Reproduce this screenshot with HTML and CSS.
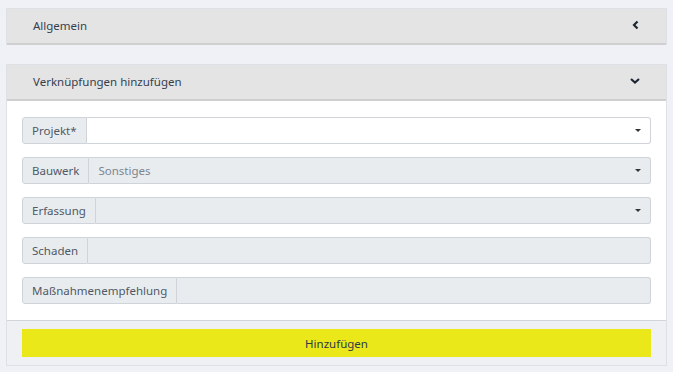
FILE: index.html
```html
<!DOCTYPE html>
<html lang="de">
<head>
    <meta charset="UTF-8">
    <meta name="viewport" content="width=device-width, initial-scale=1.0">
    <title>Verknüpfungen</title>
    <link rel="stylesheet" href="styles.css">
</head>
<body>
    <div class="card">
        <div class="card-header">
            <span>Allgemein</span>
            <svg class="chev" width="10" height="10" viewBox="0 0 10 10"><path d="M6.5 1.5 L3 5 L6.5 8.5" fill="none" stroke="#1d2733" stroke-width="2.2"/></svg>
        </div>
    </div>

    <div class="card">
        <div class="card-header">
            <span>Verknüpfungen hinzufügen</span>
            <svg class="chev" width="12" height="10" viewBox="0 0 12 10"><path d="M2 3 L6 6.5 L10 3" fill="none" stroke="#1d2733" stroke-width="2.2"/></svg>
        </div>
        <div class="card-body">
            <div class="input-group">
                <label class="addon">Projekt*</label>
                <div class="field select white"><span></span><i class="caret"></i></div>
            </div>
            <div class="input-group">
                <label class="addon">Bauwerk</label>
                <div class="field select"><span>Sonstiges</span><i class="caret"></i></div>
            </div>
            <div class="input-group">
                <label class="addon">Erfassung</label>
                <div class="field select"><span></span><i class="caret"></i></div>
            </div>
            <div class="input-group">
                <label class="addon">Schaden</label>
                <div class="field"></div>
            </div>
            <div class="input-group">
                <label class="addon">Maßnahmenempfehlung</label>
                <div class="field"></div>
            </div>
        </div>
        <div class="card-footer">
            <button class="add-btn">Hinzufügen</button>
        </div>
    </div>
</body>
</html>
```

FILE: styles.css
```css
body { margin: 0; padding: 8px 6px 0 6px; background: #eff1f6; font-family: "Noto Sans", Arial, sans-serif; font-size: 11.5px; color: #3b4a5a; }
.card { border: 1px solid #dde1e6; border-bottom-width: 0; margin-bottom: 19px; background: #fff; }
.card:last-child { margin-bottom: 0; }
.card-footer { border-bottom: 1px solid #dde1e6; }
.card-header { display: flex; justify-content: space-between; align-items: center; height: 32px; padding: 0 25px 2px 26px; background: #e4e4e4; border-bottom: 2px solid #cfcfcf; color: #36414e; }
.card-body { padding: 16px 15px 3px 15px; }
.input-group { display: flex; height: 27px; margin-bottom: 13px; }
.addon { display: flex; align-items: center; padding: 0 9px; background: #e9ecef; border: 1px solid #ced4da; border-radius: 3px 0 0 3px; color: #4f5a66; }
.field { flex: 1; display: flex; align-items: center; justify-content: space-between; padding: 0 9px; background: #e9ecef; border: 1px solid #ced4da; border-left: none; border-radius: 0 3px 3px 0; color: #7b8591; }
.field.white { background: #fff; }
.caret { width: 0; height: 0; border-left: 3px solid transparent; border-right: 3px solid transparent; border-top: 3px solid #333; }
.card-footer { background: #eef0f4; border-top: 1px solid #ced4da; padding: 8px 15px 8px 15px; }
.add-btn { display: block; width: 100%; height: 28px; border: none; background: #ebe81a; color: #2e3a48; font-family: inherit; font-size: 11.5px; }
```
